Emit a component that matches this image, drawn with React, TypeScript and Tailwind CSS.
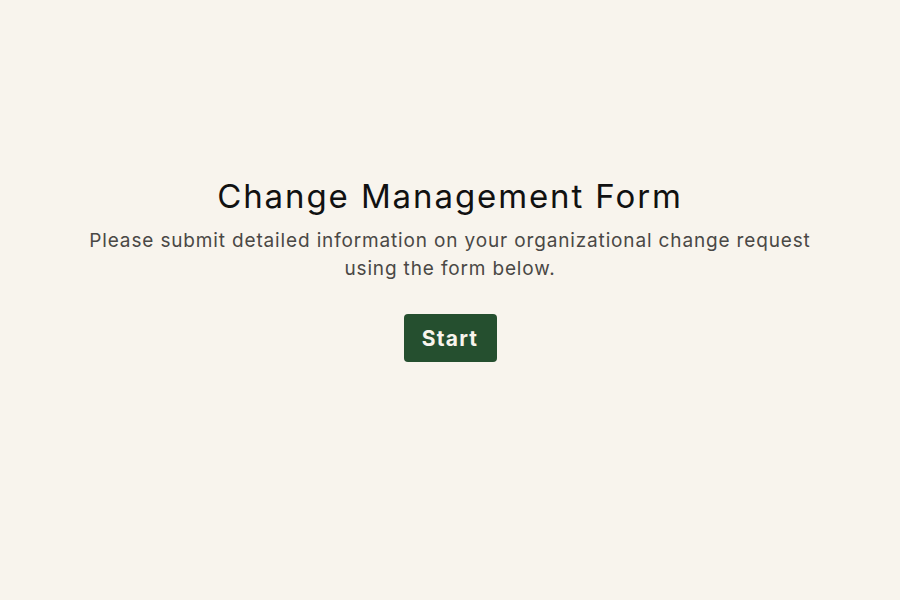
export default function App() {
  return (
    <div className="min-h-[600px] w-full bg-[#f8f4ed] flex flex-col items-center pt-[175px] font-['Inter','Noto_Sans',sans-serif]">
      <h1 className="text-[33px] leading-[42px] text-[#111111] font-normal tracking-[1.9px]">
        Change Management Form
      </h1>
      <p className="mt-[10px] max-w-[740px] text-center text-[19px] leading-[28px] tracking-[0.85px] text-[#4a4845]">
        Please submit detailed information on your organizational change request using the form below.
      </p>
      <button className="mt-[31px] h-[48px] w-[93px] rounded-[4px] bg-[#254f2f] pt-[2px] text-[#f8f4ed] text-[21px] font-bold tracking-[1.2px]">
        Start
      </button>
    </div>
  );
}
